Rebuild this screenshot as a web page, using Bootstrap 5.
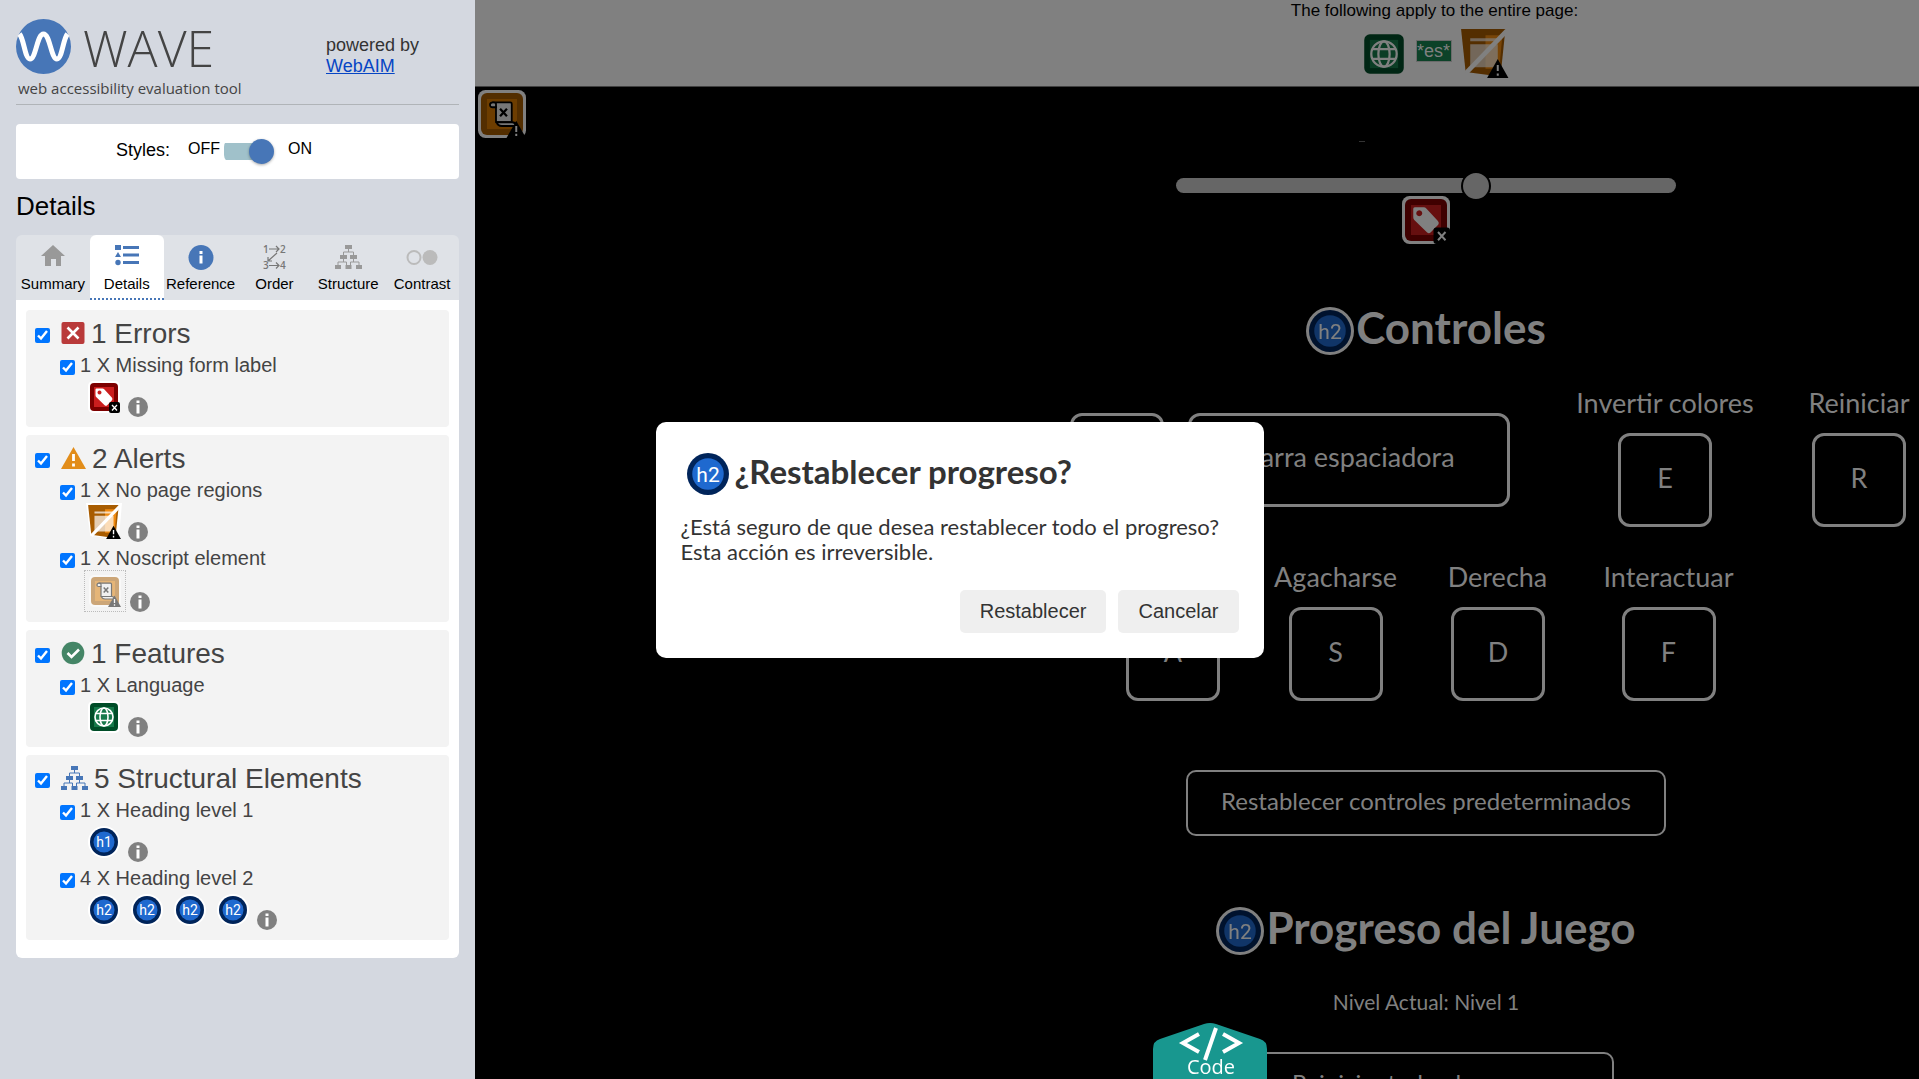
<!DOCTYPE html>
<html lang="es">
<head>
<meta charset="utf-8">
<meta name="viewport" content="width=device-width, initial-scale=1">
<title>WAVE</title>
<link rel="stylesheet" href="https://cdn.jsdelivr.net/npm/bootstrap@5.3.0/dist/css/bootstrap.min.css">
<style>
body{font-family:"Liberation Sans",Arial,sans-serif;background:#000;color:#000;overflow:hidden}
.shell{height:100vh;overflow:hidden}
/* sidebar */
.side{width:475px;background:#d4d8e0;padding:19px 16px 0}
.brand{border-bottom:1px solid #b0b4b8;height:86px}
.brand-name{font:300 50px/58px "Open Sans",sans-serif;color:#444}
.brand-tag{font:15px/20px "Open Sans",sans-serif;color:#444;margin:1px 0 0 2px}
.powered{font-size:18px;line-height:21px;color:#333;width:133px;padding-top:16px}
.powered a{color:#0645c4}
.styles-box{height:55px;border-radius:4px;margin-top:19px;padding:0 0 2px 100px}
.styles-box .lbl{font-size:18px}
.styles-box .opt{font-size:16px;margin-top:-3px}
.styles-box .lbl + .opt{margin-left:18px}
.sw{width:50px;height:26px;margin:0 14px 0 4px;appearance:none;border:0;position:relative;background:linear-gradient(#a0c1ca,#a0c1ca) 0 5px/44px 17px no-repeat;border-radius:9px}
.sw::after{content:"";position:absolute;right:0;top:1px;width:25px;height:25px;border-radius:50%;background:#4776b7;box-shadow:0 1px 3px #0005}
.side h1{font-size:26px;line-height:30px;margin:12px 0 14px 0}
.tabs{background:#dfe2e7;border-radius:6px 6px 0 0;height:65px}
.tabs a{flex:1 1 0;color:#000;font-size:15px;line-height:18px;text-decoration:none;text-align:center;border-radius:6px 6px 0 0;padding-top:9px;border-bottom:2px solid transparent;min-width:0;display:flex;flex-direction:column;align-items:center;white-space:nowrap}
.tabs svg{height:28px;width:30px;margin-bottom:3px;flex:none;overflow:visible}
.tabs a.on{background:#fff;border-bottom:2px dotted #4776b7}
.panel{background:#fff;border-radius:0 0 6px 6px;padding:10px 10px 18px}
.grp{background:#f3f3f3;border-radius:4px;padding:7px 9px;margin-bottom:8px;color:#444}
.grp:last-child{margin-bottom:0}
.grp input{appearance:auto;accent-color:#0075ff;width:15px;height:15px;margin:0;flex:none}
.grp-head{height:35px;font-size:28px;line-height:35px;padding-bottom:2px}
.grp-head input{margin-top:3px;margin-right:11px}
.grp-head svg{height:24px;margin-right:6px;margin-top:-2px}
.item-head{height:26px;padding-left:25px;font-size:20px;line-height:26px}
.item-head input{margin-right:5px;margin-top:4px}
.item-icons{padding:0 0 3px 53px;height:42px}
.item-icons .ic{width:32px;height:32px;margin:0 11px 4px 0}
.item-icons .ic.end{margin-right:8px}
.item-icons .inf{width:20px;height:20px}
.item-icons.tall{height:44px;padding-left:49px}
.item-icons .hid{border:1px dotted #bbb;width:42px;height:42px;margin-right:4px;padding:4px}
.item-icons .hid .ic{opacity:.5;margin:0}
/* evaluated page, laid out at the full window width and shifted by the sidebar */
.stage{overflow:hidden;min-width:0}
.topbar{background:#808080;height:87px;border-bottom:1px solid #404040;color:#000;font-size:17px;line-height:20px;text-align:center;width:100vw;padding-top:1px}
.topbar .ic,.pg .ic{width:48px;height:48px;flex:none}
.topbar .ic.big{width:52px;height:52px}
.dim{filter:brightness(.5)}
.lang{background:#0c4228;color:#808080;border:1px solid #6a6a6a;font-size:18px;line-height:20px;width:36px;margin:14px 6px 0 8px}
.topicons{padding-top:5px}
.pg{width:calc(100vw - 17px);flex:none;color:#808080;font-family:Lato,"Open Sans",sans-serif;font-size:24px;line-height:30px;position:relative}
.corner{position:absolute;left:3px;top:3px}
.tick{height:56px;padding-top:54px;width:6px;margin-right:128px}
.tick i{display:block;height:1px;background:#333}
.rng{appearance:none;width:500px;height:15px;border-radius:8px;background:#666;margin:35px 0 3px}
.rng::-webkit-slider-thumb{appearance:none;width:30px;height:30px;border-radius:50%;background:#666;border:2px solid #000}
.pg h2{font-size:44px;line-height:48px;font-weight:700;margin:0}
.pg h2 .ic{margin-right:2px;margin-top:6px}
.pg h2 span{margin-top:-3px}
.sec-controls{padding-top:57px}
.sec-progress{padding-top:65px}
.kbd-key{display:block;margin:0 auto;font:inherit;color:inherit;background:none;border:3px solid #808080;border-radius:12px;width:94px;height:94px;padding:0 0 5px}
.pair .kbd-key{margin:0}
.kbd-key.wide{width:322px}
.keys{display:grid;column-gap:56px;justify-content:center;align-items:center;text-align:center;white-space:nowrap;font-size:27px}
.keys.a{grid-template-columns:448px 182px 94px;margin:33px 0 0 124px}
.keys.b{grid-template-columns:94px 119px 93px 137px;margin:35px 0 0 11px}
.keys .cap{height:45px;display:flex;justify-content:center}
.pair{gap:24px}
.wide-btn{font:inherit;color:inherit;background:none;border:2px solid #808080;border-radius:10px;height:66px;padding:0 33px 5px;min-width:375px}
.reset-controls{margin-top:69px}
.level{font-size:21px;padding-top:32px}
.reset-progress{margin-top:35px}
/* dialog */
.dlg{position:fixed;left:50%;top:50%;transform:translate(-50%,-50%);width:608px;background:#fff;border-radius:10px;padding:24px 25px 25px;color:#333;font:22px/25px Lato,"Open Sans",sans-serif}
.dlg h2{font-size:33px;line-height:48px;font-weight:700;margin:4px 0 16px 3px}
.dlg h2 .ic{width:48px;height:48px;margin-right:3px}
.dlg h2 span{margin-top:-6px}
.dlg p{margin:0 0 26px}
.dlg button{font:20px/23px "Liberation Sans",sans-serif;background:#efefef;color:#333;border:0;border-radius:5px;padding:10px 20px}
.codebtn{position:fixed;left:1153px;bottom:0;width:114px;height:56px;border:0;padding:0;background:none}
</style>
</head>
<body>
<svg width="0" height="0" class="position-absolute">
<defs>
<symbol id="label" viewBox="0 0 32 32"><rect width="32" height="32" rx="5" fill="#fff"/><rect x="2" y="2" width="28" height="28" rx="4" fill="#7d0000"/><rect x="6" y="6" width="20" height="20" fill="#cb1e1e"/><path fill="#fff" fill-rule="evenodd" d="M8.500 7.500h6q1 0 1.700.8l7.600 8.200q1.400 1.500 0 3l-4.600 4.700q-1.300 1.200-2.600 0L8.200 16q-.7-.8-.7-1.800V8.500q0-1 1-1zM11.500 9.500a2 2 0 1 0 .01 0z"/><rect x="21" y="21" width="11" height="11" rx="2"/><path d="M24 24l5 5.500M29 24l-5 5.500" stroke="#fff" stroke-width="1.300"/></symbol>
<symbol id="globe" viewBox="0 0 32 32"><rect width="32" height="32" rx="5" fill="#fff"/><rect x="2" y="2" width="28" height="28" rx="4" fill="#004d28"/><rect x="6" y="6" width="20" height="20" fill="#16794a"/><g fill="none" stroke="#fff" stroke-width="1.600"><circle cx="16" cy="16" r="9"/><ellipse cx="16" cy="16" rx="4" ry="9"/><path d="M8 12.500h16M8 19.500h16"/></g></symbol>
<symbol id="region" viewBox="0 0 34 34"><path fill="#fff" d="M0 0h34l-3 34-15-1.500L4 31z"/><path fill="#a85c00" d="M2 2h29l-3 29-8 1L5 30z"/><path fill="#f08a10" d="M18 6h11l-2 22h-9z"/><path fill="#fff" opacity=".7" d="M8 8h18v2H8zM8 12h18v15H8z"/><path d="M5 31L32 3" stroke="#fff" stroke-width="3"/><path d="M26 21.500L33 34H19z"/><path d="M26 25.500v4m0 1.500v1.500" stroke="#fff" stroke-width="1.300"/></symbol>
<symbol id="noscript" viewBox="0 0 32 32"><rect width="32" height="32" rx="5" fill="#fff"/><rect x="2" y="2" width="28" height="28" rx="4" fill="#a65b00"/><rect x="6" y="6" width="20" height="20" fill="#d97900"/><g stroke="#000" stroke-width="1.200" stroke-linejoin="round"><path fill="#eee" d="M10 8.200h11.500q1 0 1 1V21.500H12V11.500z"/><path fill="#eee" d="M10 8.200q-2 0-2 1.700t2 1.600h2V9q-.3-.8-2-.8zM12.500 21.500H23q2.500.5 3 2.500H16q-3 0-3.500-2.500z"/><path d="M14.700 12.500l4.600 5m0-5l-4.600 5" stroke-width="1.500"/></g><path d="M25.500 20.500L32 32H19z"/><path d="M25.500 24v4m0 1.200v1.500" stroke="#fff" stroke-width="1.300"/></symbol>
<symbol id="h1i" viewBox="0 0 32 32"><circle cx="16" cy="16" r="16" fill="#fff"/><circle cx="16" cy="16" r="14" fill="#00245a"/><circle cx="16" cy="16" r="10.500" fill="#1f69cf"/><text x="16" y="21" font-family="Roboto" font-weight="400" font-size="14" fill="#fff" text-anchor="middle">h1</text></symbol>
<symbol id="h2i" viewBox="0 0 32 32"><circle cx="16" cy="16" r="16" fill="#fff"/><circle cx="16" cy="16" r="14" fill="#00245a"/><circle cx="16" cy="16" r="10.500" fill="#1f69cf"/><text x="16" y="21" font-family="Roboto" font-weight="400" font-size="14" fill="#fff" text-anchor="middle">h2</text></symbol>
<symbol id="inf" viewBox="0 0 20 20"><circle cx="10" cy="10" r="10" fill="#808080"/><path fill="#fff" d="M8.500 3.500h3v2.500h-3zM8.500 7.500h3v9h-3z"/></symbol>
<symbol id="tree" viewBox="0 0 27 24"><g fill="currentColor"><path d="M10 0h7v4h-7zM5 10h7v4H5zM15 10h7v4h-7zM0 20h6v4H0zM10.500 20h6v4h-6zM21 20h6v4h-6z"/></g><path fill="none" stroke="currentColor" d="M13.500 4v3M8.500 10V7h10v3M8.500 14v3M18.500 14v3M3 20v-3h8.500v3M15.500 20v-3H24v3"/></symbol>
</defs></svg>

<div class="shell d-flex">
<aside class="side flex-shrink-0">
 <div class="brand d-flex justify-content-between">
  <div>
   <div class="d-flex">
    <svg width="55" height="55" viewBox="0 0 55 55" class="flex-shrink-0"><circle cx="27.500" cy="27.500" r="27.500" fill="#4776b7"/><path d="M3.500 15C8 20 9 40 14 40C20 40 21 15 27.500 15C34 15 35 40 41 40C46 40 47 20 51.500 15" fill="none" stroke="#fff" stroke-width="5"/></svg>
    <span class="brand-name ps-2 ms-1">WAVE</span>
   </div>
   <div class="brand-tag">web accessibility evaluation tool</div>
  </div>
  <div class="powered">powered by<br><a href="#">WebAIM</a></div>
 </div>
 <div class="styles-box bg-white d-flex align-items-center">
  <label class="lbl" for="sw">Styles:</label><span class="opt">OFF</span><input class="sw" id="sw" type="checkbox" role="switch" checked><span class="opt">ON</span>
 </div>
 <h1>Details</h1>
 <nav class="tabs d-flex">
  <a href="#"><svg viewBox="0 0 30 28"><path fill="#999" d="M15 1l12 11h-4v10h-5v-7h-5v7H7V12H3z"/></svg>Summary</a>
  <a href="#" class="on"><svg viewBox="0 0 30 28"><g fill="#4776b7"><path d="M3 1h6v5H3zM6 8l3 5H3zM11 2h16v3H11zM11 9.500h16v3H11zM11 17h16v3H11z"/><circle cx="6" cy="18.500" r="2.700"/></g></svg>Details</a>
  <a href="#"><svg viewBox="0 0 30 28"><circle cx="15" cy="13.500" r="12.500" fill="#4776b7"/><path fill="#fff" d="M13.500 7h3v3h-3zM13.500 11.500h3v8h-3z"/></svg>Reference</a>
  <a href="#"><svg viewBox="0 0 30 28"><g font-family="Open Sans" font-weight="600" font-size="10" fill="#777"><text x="4" y="9">1</text><text x="21" y="9">2</text><text x="4" y="25">3</text><text x="21" y="25">4</text></g><path d="M10 5h10M17 2l3 3-3 3M10 21.500h10m-3-3l3 3-3 3M18 9l-9 8m0-4v4h4" fill="none" stroke="#777" stroke-width="1.200"/></svg>Order</a>
  <a href="#"><svg viewBox="0 0 30 28" color="#999"><use href="#tree" x="2" y="1" width="27" height="24"/></svg>Structure</a>
  <a href="#"><svg viewBox="0 0 30 28"><circle cx="7" cy="13.500" r="6.500" fill="none" stroke="#bbb" stroke-width="2"/><circle cx="23" cy="13.500" r="7.500" fill="#bbb"/></svg>Contrast</a>
 </nav>
 <div class="panel">
  <section class="grp">
   <div class="grp-head d-flex align-items-center"><input type="checkbox" id="g1" checked><svg viewBox="0 0 23 24" width="24"><rect y="1" width="23" height="22" rx="2" fill="#b93a3a"/><path d="M6 6.500l11 11m0-11l-11 11" stroke="#fff" stroke-width="2.600"/></svg><label for="g1">1 Errors</label></div>
   <div class="item-head d-flex align-items-center"><input type="checkbox" id="i1" checked><label for="i1">1 X Missing form label</label></div>
   <div class="item-icons d-flex align-items-end"><svg class="ic end"><use href="#label"/></svg><svg class="inf"><use href="#inf"/></svg></div>
  </section>
  <section class="grp">
   <div class="grp-head d-flex align-items-center"><input type="checkbox" id="g2" checked><svg viewBox="0 0 25 24" width="25"><path fill="#e28d1a" d="M12.500 1L25 23H0z"/><path d="M12.500 8v7m0 2.500v3" stroke="#fff" stroke-width="2.800"/></svg><label for="g2">2 Alerts</label></div>
   <div class="item-head d-flex align-items-center"><input type="checkbox" id="i2" checked><label for="i2">1 X No page regions</label></div>
   <div class="item-icons d-flex align-items-end"><svg class="ic end" viewBox="0 0 32 32" overflow="visible"><use href="#region" x="-2" y="-3" width="36" height="36"/></svg><svg class="inf"><use href="#inf"/></svg></div>
   <div class="item-head d-flex align-items-center"><input type="checkbox" id="i3" checked><label for="i3">1 X Noscript element</label></div>
   <div class="item-icons tall d-flex align-items-end"><div class="hid"><svg class="ic d-block"><use href="#noscript"/></svg></div><svg class="inf"><use href="#inf"/></svg></div>
  </section>
  <section class="grp">
   <div class="grp-head d-flex align-items-center"><input type="checkbox" id="g3" checked><svg viewBox="0 0 23 24" width="24"><circle cx="11.500" cy="12" r="11.300" fill="#448566"/><path d="M6 12l4 4 7.500-7.500" fill="none" stroke="#fff" stroke-width="2.600"/></svg><label for="g3">1 Features</label></div>
   <div class="item-head d-flex align-items-center"><input type="checkbox" id="i4" checked><label for="i4">1 X Language</label></div>
   <div class="item-icons d-flex align-items-end"><svg class="ic end"><use href="#globe"/></svg><svg class="inf"><use href="#inf"/></svg></div>
  </section>
  <section class="grp">
   <div class="grp-head d-flex align-items-center"><input type="checkbox" id="g4" checked><svg width="27" color="#4776b7"><use href="#tree"/></svg><label for="g4">5 Structural Elements</label></div>
   <div class="item-head d-flex align-items-center"><input type="checkbox" id="i5" checked><label for="i5">1 X Heading level 1</label></div>
   <div class="item-icons d-flex align-items-end"><svg class="ic end"><use href="#h1i"/></svg><svg class="inf"><use href="#inf"/></svg></div>
   <div class="item-head d-flex align-items-center"><input type="checkbox" id="i6" checked><label for="i6">4 X Heading level 2</label></div>
   <div class="item-icons d-flex align-items-end"><svg class="ic"><use href="#h2i"/></svg><svg class="ic"><use href="#h2i"/></svg><svg class="ic"><use href="#h2i"/></svg><svg class="ic end"><use href="#h2i"/></svg><svg class="inf"><use href="#inf"/></svg></div>
  </section>
 </div>
</aside>

<main class="stage flex-grow-1">
 <div class="topbar">
  <div>The following apply to the entire page:</div>
  <div class="topicons d-flex justify-content-center align-items-start"><svg class="ic dim mt-1" viewBox="0 0 34 34"><use href="#globe" x="1" y="1" width="32" height="32"/></svg><span class="lang">*es*</span><svg class="ic big dim"><use href="#region"/></svg></div>
 </div>
 <div class="pg d-flex flex-column align-items-center">
  <svg class="ic dim corner"><use href="#noscript"/></svg>
  <div class="tick"><i></i></div>
  <input class="rng" type="range" min="0" max="1000" value="606" aria-label="Volumen">
  <svg class="ic dim"><use href="#label"/></svg>
  <h2 class="sec-controls d-flex align-items-center"><svg class="ic dim"><use href="#h2i"/></svg><span>Controles</span></h2>
  <div class="keys a">
   <div class="pair d-flex pt-1"><button class="kbd-key">W</button><button class="kbd-key wide">Barra espaciadora</button></div>
   <div><div class="cap">Invertir colores</div><button class="kbd-key">E</button></div>
   <div><div class="cap">Reiniciar</div><button class="kbd-key">R</button></div>
  </div>
  <div class="keys b">
   <div><div class="cap">Izquierda</div><button class="kbd-key">A</button></div>
   <div><div class="cap">Agacharse</div><button class="kbd-key">S</button></div>
   <div><div class="cap">Derecha</div><button class="kbd-key">D</button></div>
   <div><div class="cap">Interactuar</div><button class="kbd-key">F</button></div>
  </div>
  <button class="wide-btn reset-controls">Restablecer controles predeterminados</button>
  <h2 class="sec-progress d-flex align-items-center"><svg class="ic dim"><use href="#h2i"/></svg><span>Progreso del Juego</span></h2>
  <div class="level">Nivel Actual: Nivel 1</div>
  <button class="wide-btn reset-progress">Reiniciar todo el progreso</button>
 </div>
</main>
</div>

<div class="dlg" role="dialog" aria-labelledby="dt">
 <h2 class="d-flex align-items-center" id="dt"><svg class="ic"><use href="#h2i"/></svg><span>¿Restablecer progreso?</span></h2>
 <p>¿Está seguro de que desea restablecer todo el progreso?<br>Esta acción es irreversible.</p>
 <div class="d-flex justify-content-end gap-2"><button>Restablecer</button><button class="ms-1">Cancelar</button></div>
</div>
<button class="codebtn" aria-label="Code"><svg width="114" height="56" class="d-block"><path fill="#18978f" d="M0 56V26q0-8 7-10L51 1q6-2 12 0l44 15q7 2 7 10v30z"/><path d="M46 11L30 20l16 9M70 11l16 9-16 9M63 5L52 37" fill="none" stroke="#fff" stroke-width="4"/><text x="58" y="51" text-anchor="middle" font-family="Open Sans" font-size="20" fill="#fff">Code</text></svg></button>
<script src="https://cdn.jsdelivr.net/npm/bootstrap@5.3.0/dist/js/bootstrap.bundle.min.js"></script>
</body>
</html>
